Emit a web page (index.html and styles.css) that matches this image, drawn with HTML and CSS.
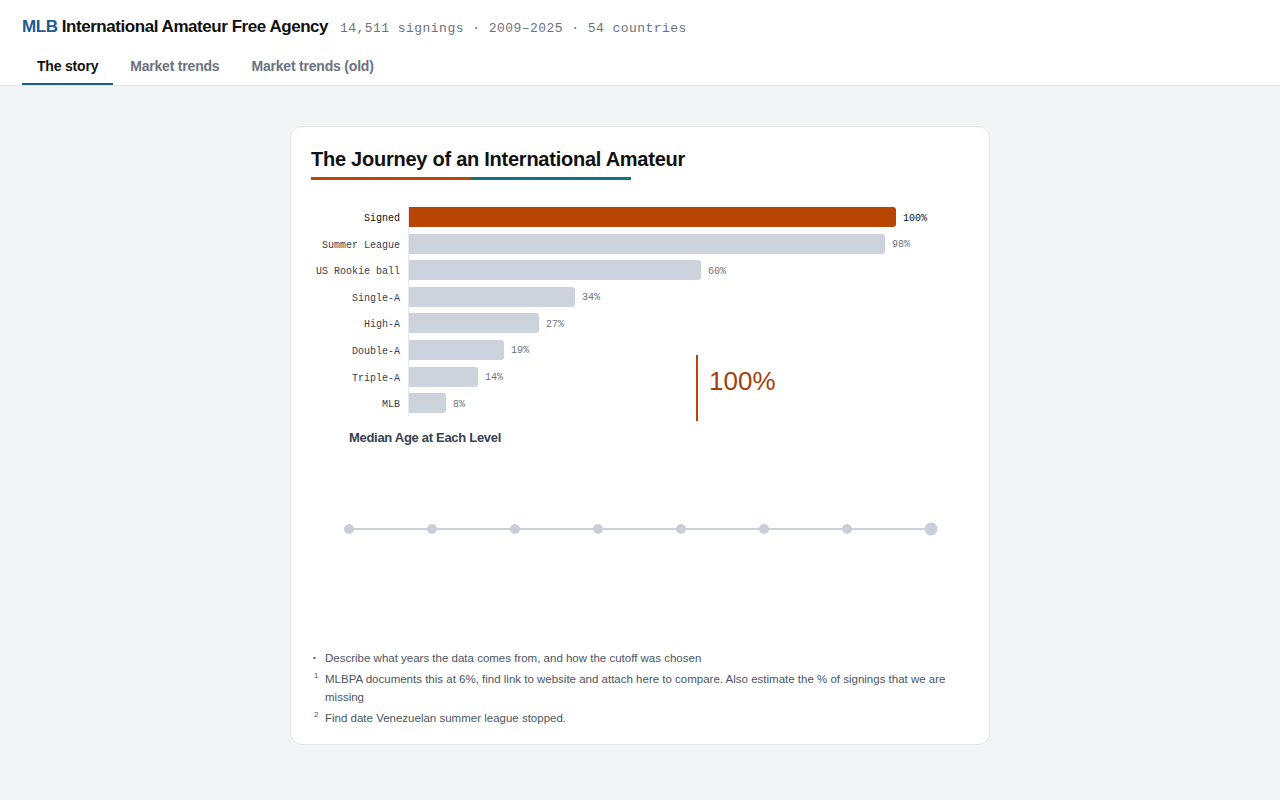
FILE: index.html
```html
<!DOCTYPE html>
<html lang="en">
<head>
<meta charset="utf-8">
<title>MLB International Amateur Free Agency</title>
<link rel="stylesheet" href="styles.css">
</head>
<body>
<header class="topbar">
  <div class="title-row">
    <h1 class="site-title"><span class="mlb">MLB</span> International Amateur Free Agency</h1>
    <span class="meta">14,511 signings · 2009–2025 · 54 countries</span>
  </div>
  <nav class="tabs">
    <a class="tab active">The story</a>
    <a class="tab">Market trends</a>
    <a class="tab">Market trends (old)</a>
  </nav>
</header>
<main class="page">
  <section class="card">
    <h2 class="card-title">The Journey of an International Amateur</h2>
    <div class="title-rule"><span class="rule-a"></span><span class="rule-b"></span></div>

    <div class="chart">
      <div class="labels">
        <div class="lbl strong">Signed</div>
        <div class="lbl">Summer League</div>
        <div class="lbl">US Rookie ball</div>
        <div class="lbl">Single-A</div>
        <div class="lbl">High-A</div>
        <div class="lbl">Double-A</div>
        <div class="lbl">Triple-A</div>
        <div class="lbl">MLB</div>
      </div>
      <div class="bars">
        <div class="row"><div class="bar hot" style="width:487px"></div><span class="val strong">100%</span></div>
        <div class="row"><div class="bar" style="width:476px"></div><span class="val">98%</span></div>
        <div class="row"><div class="bar" style="width:292px"></div><span class="val">60%</span></div>
        <div class="row"><div class="bar" style="width:166px"></div><span class="val">34%</span></div>
        <div class="row"><div class="bar" style="width:130px"></div><span class="val">27%</span></div>
        <div class="row"><div class="bar" style="width:95px"></div><span class="val">19%</span></div>
        <div class="row"><div class="bar" style="width:69px"></div><span class="val">14%</span></div>
        <div class="row"><div class="bar" style="width:37px"></div><span class="val">8%</span></div>
      </div>
      <div class="callout"><span class="callout-num">100%</span></div>
    </div>

    <h3 class="sub-title">Median Age at Each Level</h3>
    <div class="timeline">
      <svg width="658" height="203" viewBox="0 0 658 203">
        <line x1="38" y1="83" x2="620" y2="83" stroke="#cbd1db" stroke-width="2"/>
        <circle cx="38" cy="83" r="5" fill="#c9ced9"/>
        <circle cx="121" cy="83" r="5" fill="#c9ced9"/>
        <circle cx="204" cy="83" r="5" fill="#c9ced9"/>
        <circle cx="287" cy="83" r="5" fill="#c9ced9"/>
        <circle cx="370" cy="83" r="5" fill="#c9ced9"/>
        <circle cx="453" cy="83" r="5" fill="#c9ced9"/>
        <circle cx="536" cy="83" r="5" fill="#c9ced9"/>
        <circle cx="620" cy="83" r="6.5" fill="#c9ced9"/>
      </svg>
    </div>

    <ul class="notes">
      <li class="note"><span class="mark bullet">•</span><span>Describe what years the data comes from, and how the cutoff was chosen</span></li>
      <li class="note"><span class="mark"><sup>1</sup></span><span>MLBPA documents this at 6%, find link to website and attach here to compare. Also estimate the % of signings that we are missing</span></li>
      <li class="note"><span class="mark"><sup>2</sup></span><span>Find date Venezuelan summer league stopped.</span></li>
    </ul>
  </section>
</main>
</body>
</html>
```

FILE: styles.css
```css
* { box-sizing: border-box; }
html, body { margin: 0; padding: 0; }
body {
  background: #f3f4f6;
  font-family: "Liberation Sans", Arial, sans-serif;
  color: #111827;
  min-height: 800px;
}
.topbar {
  background: #ffffff;
  border-bottom: 1px solid #e3e6eb;
  padding: 16px 22px 0;
  height: 86px;
}
.title-row {
  display: flex;
  align-items: baseline;
  gap: 12px;
  height: 22px;
}
.site-title {
  margin: 0;
  font-size: 17px;
  font-weight: 700;
  letter-spacing: -0.45px;
  line-height: 22px;
  color: #111111;
}
.mlb { color: #1d5b93; }
.meta {
  font-family: "Liberation Mono", "DejaVu Sans Mono", monospace;
  font-size: 13px;
  letter-spacing: 0.45px;
  color: #6b7280;
}
.tabs {
  display: flex;
  gap: 2px;
  margin-top: 9px;
}
.tab {
  display: block;
  padding: 11px 15px 8px;
  font-size: 14px;
  font-weight: 700;
  color: #6b7280;
  border-bottom: 2px solid transparent;
  line-height: 17px;
  letter-spacing: -0.2px;
}
.tab.active {
  color: #111111;
  border-bottom-color: #1d5b93;
}
.page {
  padding-top: 40px;
  display: flex;
  justify-content: center;
}
.card {
  width: 700px;
  background: #ffffff;
  border: 1px solid #e3e6eb;
  border-radius: 12px;
  padding: 20px 20px 17px;
}
.card-title {
  margin: 0;
  font-size: 20px;
  font-weight: 700;
  line-height: 24px;
  letter-spacing: -0.25px;
  color: #111111;
}
.title-rule {
  display: flex;
  width: 320px;
  height: 3px;
  margin-top: 6px;
}
.rule-a { flex: 1; background: #b8460a; }
.rule-b { flex: 1; background: #15737f; }
.chart {
  position: relative;
  display: flex;
  margin-top: 24px;
}
.labels {
  width: 97px;
  padding: 3px 8px 3px 0;
  display: flex;
  flex-direction: column;
  gap: 6.6px;
}
.lbl {
  height: 20px;
  line-height: 23px;
  text-align: right;
  font-family: "Liberation Mono", "DejaVu Sans Mono", monospace;
  font-size: 10px;
  color: #374151;
  white-space: nowrap;
}
.lbl.strong { color: #111111; }
.bars {
  flex: 1;
  border-left: 1px solid #e5e7eb;
  padding: 3px 0;
  display: flex;
  flex-direction: column;
  gap: 6.6px;
}
.row {
  display: flex;
  align-items: center;
  height: 20px;
}
.bar {
  height: 20px;
  background: #cdd3dc;
  border-radius: 0 3px 3px 0;
}
.bar.hot { background: #b94504; }
.val {
  margin-left: 7px;
  padding-top: 2px;
  font-family: "Liberation Mono", "DejaVu Sans Mono", monospace;
  font-size: 10px;
  color: #6b7280;
}
.val.strong { color: #111111; }
.callout {
  position: absolute;
  left: 385px;
  top: 151px;
  height: 66px;
  border-left: 2px solid #b8460a;
  padding-left: 11px;
  display: flex;
  align-items: flex-start;
}
.callout-num {
  margin-top: 9px;
  font-size: 26px;
  line-height: 34px;
  color: #a43f0d;
  font-family: "Liberation Sans", Arial, sans-serif;
}
.sub-title {
  margin: 14px 0 0 38px;
  font-size: 13px;
  font-weight: 700;
  line-height: 16px;
  letter-spacing: -0.3px;
  color: #374151;
}
.timeline { height: 203px; }
.timeline svg { display: block; }
.notes {
  list-style: none;
  margin: 0;
  padding: 0;
  display: flex;
  flex-direction: column;
  gap: 3px;
}
.note {
  display: flex;
  font-size: 11.5px;
  line-height: 18px;
  color: #4b5563;
}
.mark {
  width: 14px;
  flex-shrink: 0;
  padding-left: 3px;
  color: #4b5563;
}
.mark.bullet { font-size: 8px; padding-left: 2px; }
.mark sup { font-size: 8px; line-height: 0; }
```
